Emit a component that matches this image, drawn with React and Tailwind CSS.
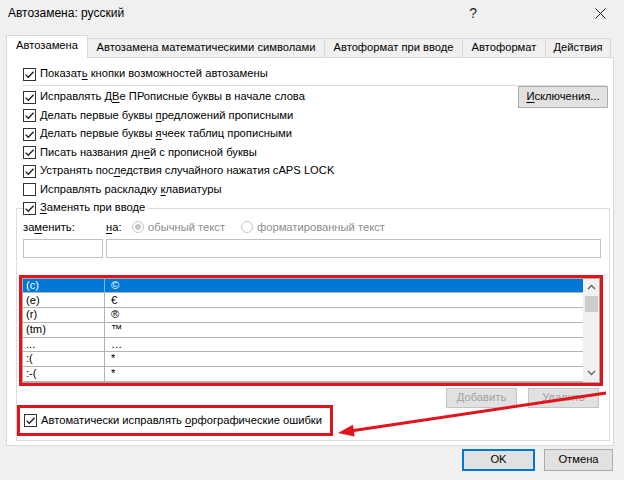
import React from 'react';

// Окно «Автозамена: русский» (Word), вкладка «Автозамена»

const CheckBox = ({ checked }) => (
  <span className="w-[13px] h-[13px] border border-[#333333] bg-white flex items-center justify-center shrink-0">
    {checked && (
      <svg width="11" height="11" viewBox="0 0 11 11">
        <path d="M1.6 5.6 L4.3 8.3 L9.6 2.7" fill="none" stroke="#1a1a1a" strokeWidth="1.25" />
      </svg>
    )}
  </span>
);

const Radio = ({ checked }) => (
  <span className="w-[12px] h-[12px] rounded-full border border-[#c4c4c4] bg-white flex items-center justify-center shrink-0">
    {checked && <span className="w-[6px] h-[6px] rounded-full bg-[#c4c4c4]" />}
  </span>
);

const CheckRow = ({ checked, children, right }) => (
  <div className="h-[18.5px] flex items-center pl-[16px] pr-[5px]">
    <CheckBox checked={checked} />
    <span className="ml-[4px] whitespace-nowrap">{children}</span>
    {right && <div className="ml-auto">{right}</div>}
  </div>
);

const U = ({ children }) => <span className="underline underline-offset-2">{children}</span>;

const tabs = [
  { label: 'Автозамена', w: 'w-[82px]', active: true },
  { label: 'Автозамена математическими символами', w: 'w-[237px]' },
  { label: 'Автоформат при вводе', w: 'w-[138px]' },
  { label: 'Автоформат', w: 'w-[83px]' },
  { label: 'Действия', w: 'w-[65px]' },
];

const entries = [
  ['(c)', '©'],
  ['(e)', '€'],
  ['(r)', '®'],
  ['(tm)', '™'],
  ['...', '…'],
  [':(', '*'],
  [':-(', '*'],
];

const Chevron = ({ up }) => (
  <svg width="9" height="6" viewBox="0 0 9 6">
    <path d={up ? 'M1 5 L4.5 1.5 L8 5' : 'M1 1 L4.5 4.5 L8 1'} fill="none" stroke="#606060" strokeWidth="1.3" />
  </svg>
);

const App = () => {
  return (
    <div className="relative w-[624px] h-[480px] overflow-hidden bg-[#f0f0f0] text-[11.2px] leading-none text-black font-['Liberation_Sans','Noto_Sans',sans-serif]">
      {/* заголовок */}
      <div className="h-[26px] flex items-center pl-[8px] text-[12px]">
        <span>Автозамена: русский</span>
        <span className="ml-auto mr-[118px] text-[14px] text-[#222]">?</span>
        <svg className="mr-[18px]" width="11" height="11" viewBox="0 0 11 11">
          <path d="M0.5 0.5 L10.5 10.5 M10.5 0.5 L0.5 10.5" stroke="#222" strokeWidth="1" />
        </svg>
      </div>

      {/* вкладки */}
      <div className="h-[32px] flex items-end pl-[6px] -mb-px">
        {tabs.map((t) =>
          t.active ? (
            <div key={t.label} className={`${t.w} h-[23px] relative z-10 bg-white border-l border-t border-r border-[#d9d9d9] flex items-center justify-center pb-[2px]`}>
              {t.label}
            </div>
          ) : (
            <div key={t.label} className={`${t.w} h-[20px] bg-[#f0f0f0] border-t border-r border-b border-[#d9d9d9] flex items-center justify-center whitespace-nowrap`}>
              {t.label}
            </div>
          )
        )}
      </div>

      {/* панель вкладки */}
      <div className="ml-[6px] w-[608px] h-[389px] bg-white border border-[#d9d9d9] pt-[7px]">
        <div className="h-[18px] flex items-center pl-[16px]">
          <CheckBox checked />
          <span className="ml-[4px]">Показат<U>ь</U> кнопки возможностей автозамены</span>
        </div>
        <div className="mt-[2px] ml-[15px] w-[584px] h-px bg-[#dcdcdc]" />
        <div className="mt-[1.75px]">
          <CheckRow
            checked
            right={
              <button className="h-[22px] w-[90px] bg-[#e1e1e1] border border-[#adadad] flex items-center justify-center">
                <U>И</U>сключения...
              </button>
            }
          >
            Исправлять Д<U>В</U>е ПРописные буквы в начале слова
          </CheckRow>
          <CheckRow checked>Делать первые буквы <U>п</U>редложений прописными</CheckRow>
          <CheckRow checked>Делать первые буквы <U>я</U>чеек таблиц прописными</CheckRow>
          <CheckRow checked>Писать названия дн<U>е</U>й с прописной буквы</CheckRow>
          <CheckRow checked>Устранять пос<U>л</U>едствия случайного нажатия cAPS LOCK</CheckRow>
          <CheckRow>Исправлять раскладку <U>к</U>лавиатуры</CheckRow>
        </div>

        {/* группа «Заменять при вводе» */}
        <fieldset className="ml-[9px] w-[592px] border border-[#dcdcdc] px-[6px] pb-[4px]">
          <legend className="h-[18.5px] flex items-center pr-[3px]">
            <CheckBox checked />
            <span className="ml-[4px]"><U>З</U>аменять при вводе</span>
          </legend>

          <div className="h-[20px] flex items-center">
            <span className="w-[83px]">за<U>м</U>енить:</span>
            <span className="w-[26px]"><U>н</U>а:</span>
            <Radio checked />
            <span className="ml-[4px] w-[93px] text-[#8c8c8c]">обычный текст</span>
            <Radio />
            <span className="ml-[4px] text-[#8c8c8c]">форматированный текст</span>
          </div>

          <div className="mt-[1.5px] h-[19px] flex">
            <div className="w-[80px] h-full border border-[#c2c2c2] bg-white" />
            <div className="ml-[3px] w-[495px] h-full border border-[#c2c2c2] bg-white" />
          </div>

          {/* список замен */}
          <div className="mt-[17px] -ml-[4px] w-[584px] h-[111px] border-[3px] border-[#e3131c]">
            <div className="h-full border border-[#a9a9a9] flex bg-white">
              <div className="flex-1 flex flex-col">
                {entries.map(([from, to], i) => (
                  <div
                    key={from}
                    className={`h-[14.7px] flex border-b border-[#b4b4b4] ${i === 0 ? 'bg-[#0078d7] text-white' : ''}`}
                  >
                    <span className={`w-[82px] pl-[3px] flex items-center border-r ${i === 0 ? 'border-[#7fb4e6]' : 'border-[#b4b4b4]'}`}>
                      {from}
                    </span>
                    <span className="flex-1 pl-[6px] flex items-center">{to}</span>
                  </div>
                ))}
              </div>
              <div className="w-[16px] bg-[#f0f0f0] flex flex-col items-center">
                <div className="h-[17px] flex items-center justify-center"><Chevron up /></div>
                <div className="w-[13px] h-[16px] bg-[#cdcdcd]" />
                <div className="mt-auto h-[17px] flex items-center justify-center"><Chevron /></div>
              </div>
            </div>
          </div>

          <div className="mt-[2px] h-[20px] flex">
            <button className="ml-[423px] w-[71px] h-full bg-[#e1e1e1] border border-[#c4c4c4] text-[#a0a0a0] flex items-center justify-center">
              Добавить
            </button>
            <button className="ml-[11px] w-[71px] h-full bg-[#e1e1e1] border border-[#c4c4c4] text-[#a0a0a0] flex items-center justify-center">
              Удалить
            </button>
          </div>

          <div className="-mt-[3px] -ml-[6px] w-[316px] h-[31px] border-[3px] border-[#e3131c] flex items-center pl-[4px]">
            <CheckBox checked />
            <span className="ml-[4px] whitespace-nowrap">Автоматически исправлять <U>о</U>рфографические ошибки</span>
          </div>
        </fieldset>
      </div>

      {/* кнопки диалога */}
      <div className="mt-[3px] h-[22px] flex justify-end pr-[11px] gap-[9px]">
        <button className="w-[73px] h-full bg-[#e1e1e1] border-2 border-[#0078d7] flex items-center justify-center">OK</button>
        <button className="w-[69px] h-full bg-[#e1e1e1] border border-[#adadad] flex items-center justify-center">Отмена</button>
      </div>

      {/* стрелка-выноска */}
      <svg className="absolute inset-0 pointer-events-none" width="624" height="480" viewBox="0 0 624 480">
        <line x1="606" y1="393" x2="352" y2="430.8" stroke="#e3131c" strokeWidth="3" />
        <polygon points="338,433 354.7,436.5 352.9,424.7" fill="#e3131c" />
      </svg>
    </div>
  );
};

export default App;
